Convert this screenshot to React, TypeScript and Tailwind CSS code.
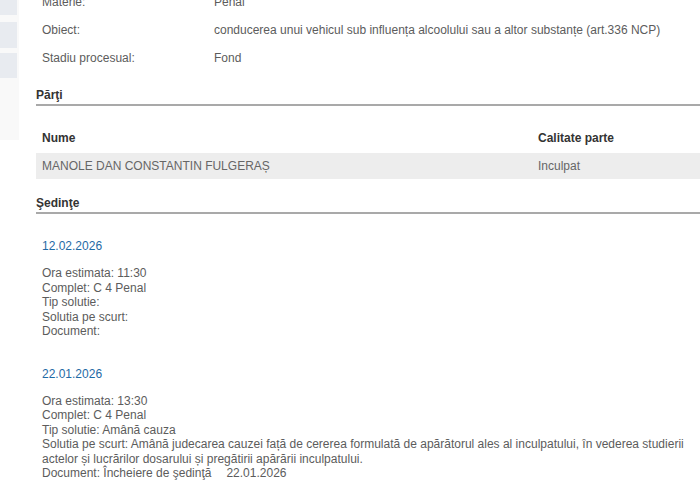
import React from 'react';

const info = [
  { label: 'Materie:', value: 'Penal' },
  { label: 'Obiect:', value: 'conducerea unui vehicul sub influența alcoolului sau a altor substanțe (art.336 NCP)' },
  { label: 'Stadiu procesual:', value: 'Fond' },
];

const SectionTitle = ({ children, className = '' }: { children: React.ReactNode; className?: string }) => (
  <div className={`border-b-2 border-[#a9a9a9] pb-[1px] text-[12px] leading-[15px] font-bold text-[#333] font-['Liberation_Sans',Arial,sans-serif] ${className}`}>
    {children}
  </div>
);

const Hearing = ({ date, lines, className = '' }: { date: string; lines: React.ReactNode[]; className?: string }) => (
  <div className={`pl-[6px] ${className}`}>
    <div className="text-[12px] leading-[14px] text-[#1f6aa5]">{date}</div>
    <div className="mt-[13px] text-[12px] leading-[14.5px] text-[#5c5c5c] whitespace-nowrap">
      {lines.map((l, i) => (
        <div key={i}>{l}</div>
      ))}
    </div>
  </div>
);

export default function App() {
  return (
    <div className="relative w-[700px] h-[483px] overflow-hidden bg-white flex font-['Liberation_Sans',Arial,sans-serif]">
      {/* left nav strip */}
      <div className="w-[19px] shrink-0 h-[140px] bg-[#f9f9f9] flex flex-col">
        <div className="w-[17px] h-[15px] bg-[#e8ebf0]" />
        <div className="w-[17px] h-[26px] mt-[7px] bg-[#e8ebf0]" />
        <div className="w-[17px] h-[25px] mt-[5px] bg-[#e8ebf0]" />
      </div>

      <div className="flex-1 min-w-0 pl-[17px]">
        <div className="-mt-[12px]">
          {info.map((r) => (
            <div key={r.label} className="h-[28px] flex items-center pl-[6px] text-[12px] text-[#5c5c5c] whitespace-nowrap">
              <div className="w-[172px] shrink-0">{r.label}</div>
              <div>{r.value}</div>
            </div>
          ))}
        </div>

        <SectionTitle className="mt-[16px]">Părţi</SectionTitle>

        <div className="mt-[19px] text-[12px]">
          <div className="grid grid-cols-[502px_1fr] h-[26px] items-center font-bold text-[#333]">
            <div className="pl-[6px]">Nume</div>
            <div>Calitate parte</div>
          </div>
          <div className="grid grid-cols-[502px_1fr] h-[26px] mt-[2px] items-center bg-[#ededed] text-[#666]">
            <div className="pl-[6px]">MANOLE DAN CONSTANTIN FULGERAȘ</div>
            <div>Inculpat</div>
          </div>
        </div>

        <SectionTitle className="mt-[17px]">Şedinţe</SectionTitle>

        <Hearing
          className="mt-[25px]"
          date="12.02.2026"
          lines={['Ora estimata: 11:30', 'Complet: C 4 Penal', 'Tip solutie:', 'Solutia pe scurt:', 'Document:']}
        />

        <Hearing
          className="mt-[28px]"
          date="22.01.2026"
          lines={[
            'Ora estimata: 13:30',
            'Complet: C 4 Penal',
            'Tip solutie: Amână cauza',
            'Solutia pe scurt: Amână judecarea cauzei față de cererea formulată de apărătorul ales al inculpatului, în vederea studierii',
            'actelor și lucrărilor dosarului și pregătirii apărării inculpatului.',
            <>
              Document: Încheiere de şedinţă<span className="ml-[15px]">22.01.2026</span>
            </>,
          ]}
        />
      </div>
    </div>
  );
}
